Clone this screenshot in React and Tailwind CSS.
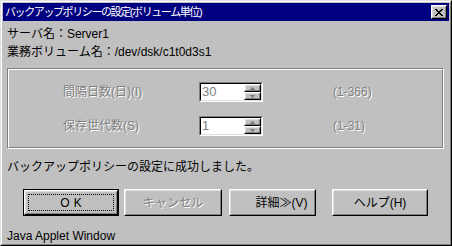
import React from 'react';

const jp = "font-['Liberation_Sans','Noto_Sans_CJK_JP',sans-serif]";
const etched = '[text-shadow:1px_1px_0_#ffffff] text-[#808080]';

const Bevel = ({ className = '', children }) => (
  <div className={`border border-t-white border-l-white border-r-black border-b-black ${className}`}>
    <div className="w-full h-full border border-t-[#dfdfdf] border-l-[#dfdfdf] border-r-[#808080] border-b-[#808080] flex items-center justify-center">
      {children}
    </div>
  </div>
);

const Arrow = ({ up }) => (
  <svg width="5" height="3" viewBox="0 0 5 3">
    {up ? (
      <path d="M2 0h1v1h1v1h1v1H0V2h1V1h1z" fill="#808080" />
    ) : (
      <path d="M0 0h5v1H4v1H3v1H2V2H1V1H0z" fill="#808080" />
    )}
  </svg>
);

const Spinner = ({ value }) => (
  <div className="w-[64px] h-[20px] flex bg-white border border-t-[#808080] border-l-[#808080] border-r-white border-b-white">
    <div className="flex-1 flex border border-t-black border-l-black border-r-[#dfdfdf] border-b-[#dfdfdf]">
      <div className="flex-1 text-[13px] leading-[16px] text-[#808080] pl-[1px] font-['Liberation_Sans',sans-serif]">{value}</div>
      <div className="w-[17px] flex flex-col">
        <Bevel className="h-[9px] bg-[#c0c0c0]"><Arrow up /></Bevel>
        <Bevel className="h-[9px] bg-[#c0c0c0]"><Arrow /></Bevel>
      </div>
    </div>
  </div>
);

const Row = ({ label, value, range }) => (
  <div className="flex items-center h-[20px]">
    <div className={`w-[190px] shrink-0 pl-[54px] text-[12px] ${etched}`}>{label}</div>
    <Spinner value={value} />
    <div className={`pl-[70px] text-[12px] ${etched}`}>{range}</div>
  </div>
);

const Button = ({ width, children, disabled, shift = '' }) => (
  <Bevel className={`h-[27px] ${width} bg-[#c0c0c0]`}>
    <span className={`text-[12px] ${shift} ${disabled ? etched : 'text-black'}`}>{children}</span>
  </Bevel>
);

export default function App() {
  return (
    <div className={`w-[452px] h-[246px] bg-[#c0c0c0] ${jp} border border-t-[#dfdfdf] border-l-[#dfdfdf] border-r-black border-b-black`}>
      <div className="w-full h-full border border-t-white border-l-white border-r-[#808080] border-b-[#808080] p-[1px] flex flex-col">
        {/* title bar */}
        <div className="h-[18px] bg-[#000080] flex items-center justify-between pl-[2px] pr-[2px]">
          <span className="text-white text-[11px] leading-[18px] tracking-[-1.4px]">バックアップポリシーの設定(ボリューム単位)</span>
          <Bevel className="w-[16px] h-[14px] bg-[#c0c0c0]">
            <svg width="8" height="7" viewBox="0 0 8 7">
              <path d="M0 0h2v1h1v1h2V1h1V0h2v1H7v1H6v1H5v1h1v1h1v1h1v1H6V6H5V5H3v1H2v1H0V6h1V5h1V4h1V3H2V2H1V1H0z" fill="#000" />
            </svg>
          </Bevel>
        </div>

        <div className="px-[4px] pt-[4px] flex flex-col text-[12px] text-black">
          <div className="h-[18px] leading-[18px]">サーバ名：Server1</div>
          <div className="h-[18px] leading-[18px]">業務ボリューム名：/dev/dsk/c1t0d3s1</div>

          {/* group box */}
          <div className="mt-[7px] w-[437px] h-[81px] border border-t-[#808080] border-l-[#808080] border-r-white border-b-white">
            <div className="w-full h-full border border-t-white border-l-white border-r-[#808080] border-b-[#808080] pt-[12px] flex flex-col gap-[14px]">
              <Row label="間隔日数(日)(I)" value="30" range="(1-366)" />
              <Row label="保存世代数(S)" value="1" range="(1-31)" />
            </div>
          </div>

          <div className="mt-[9px] h-[18px] leading-[18px]">バックアップポリシーの設定に成功しました。</div>

          <div className="mt-[13px] flex pl-[16px]">
            <div className="w-[96px] h-[27px] border border-black">
              <div className="w-full h-full border border-t-white border-l-white border-r-black border-b-black">
                <div className="w-full h-full border border-t-[#dfdfdf] border-l-[#dfdfdf] border-r-[#808080] border-b-[#808080] p-[2px]">
                  <div className="w-full h-full border border-dotted border-black flex items-center justify-center text-[12px] tracking-[4px] pl-[4px]">OK</div>
                </div>
              </div>
            </div>
            <div className="ml-[5px]"><Button width="w-[98px]" disabled>キャンセル</Button></div>
            <div className="ml-[7px]"><Button width="w-[87px]" shift="pl-[18px]">詳細≫(V)</Button></div>
            <div className="ml-[16px]"><Button width="w-[96px]">ヘルプ(H)</Button></div>
          </div>

          <div className="mt-[12px] h-[16px] leading-[16px] text-[12px]">Java Applet Window</div>
        </div>
      </div>
    </div>
  );
}
